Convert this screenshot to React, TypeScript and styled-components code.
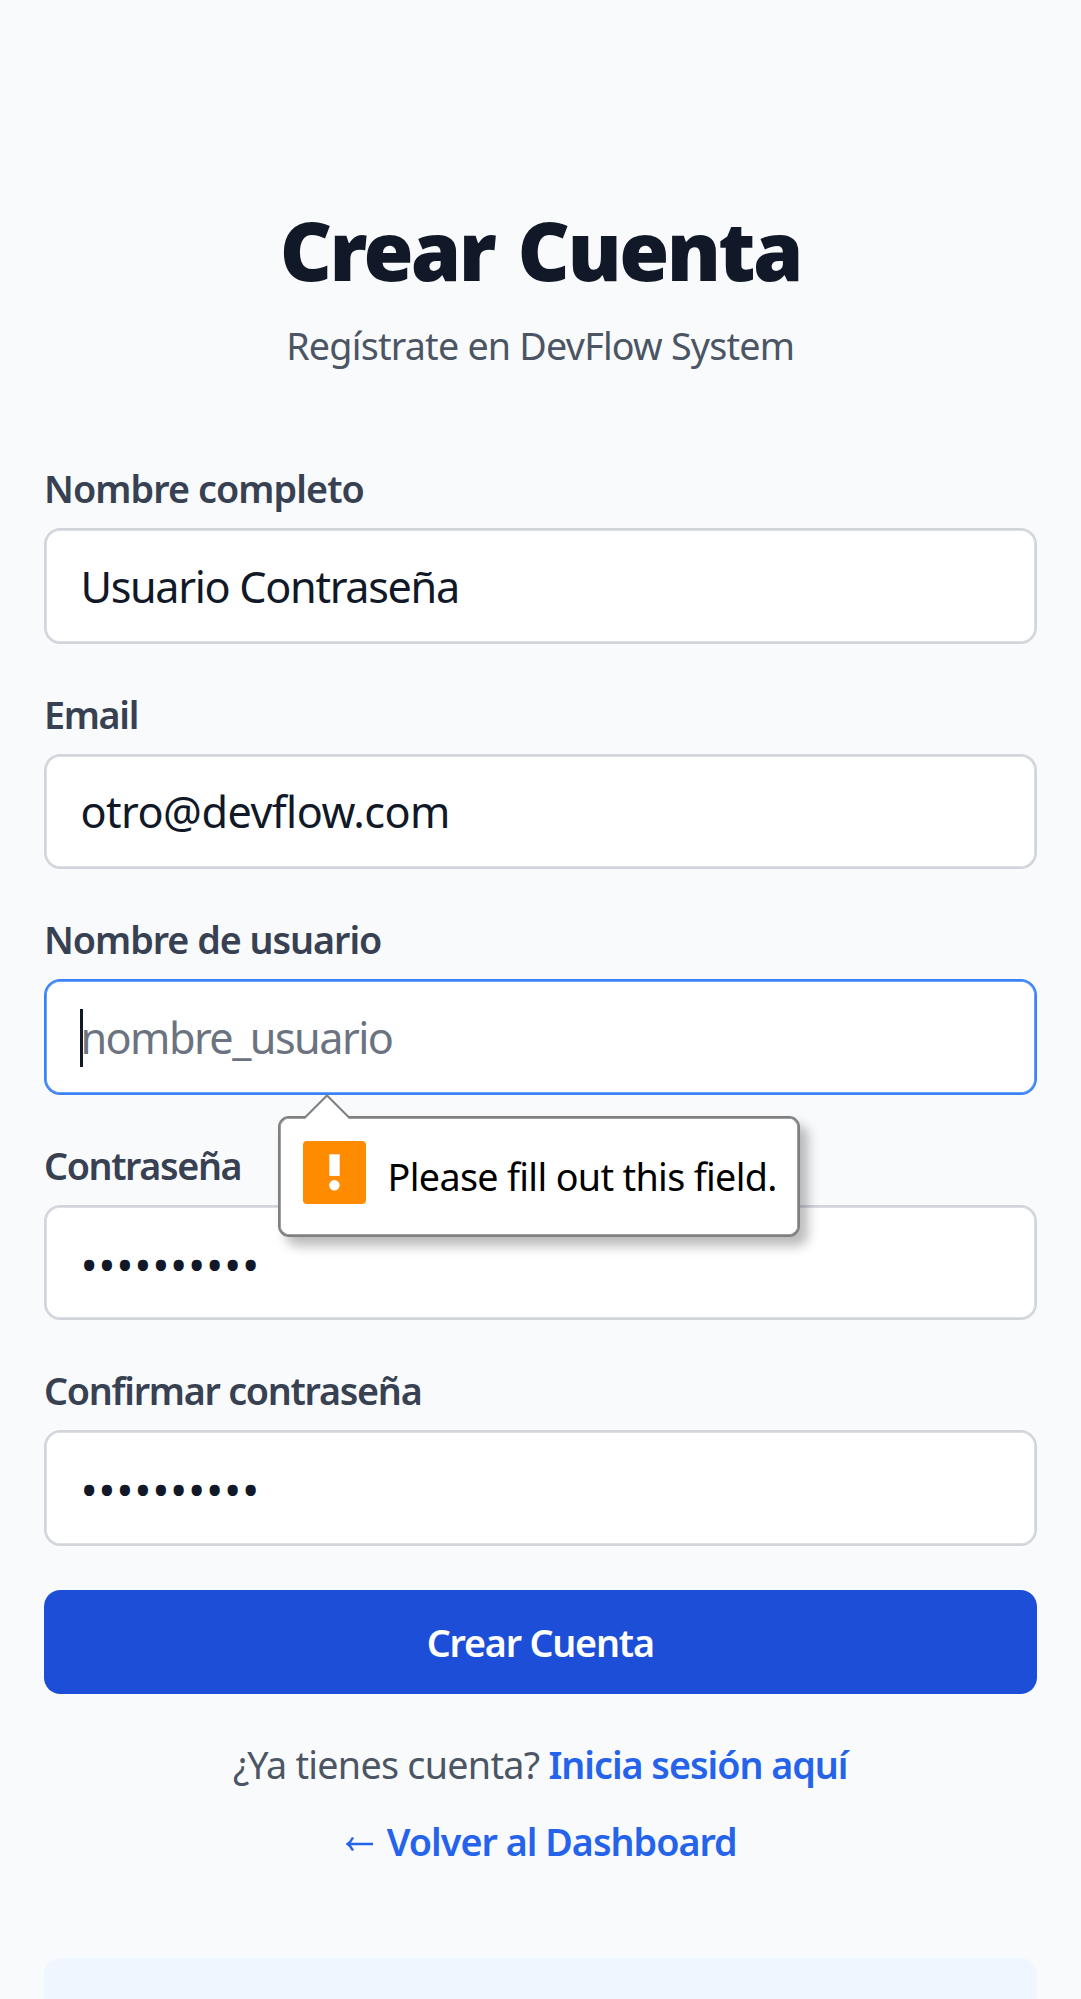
import React from "react";
import styled, { createGlobalStyle } from "styled-components";

const GlobalStyle = createGlobalStyle`
  *, *::before, *::after { box-sizing: border-box; }
  html, body { margin: 0; background: #f9fafc; }
  body {
    height: 1999px;
    overflow: hidden;
    font-family: "Noto Sans", "Open Sans", sans-serif;
  }
`;

const Page = styled.main`
  display: flex;
  flex-direction: column;
  height: 1999px;
  overflow: hidden;
  padding: 200px 44.5px 0 44px;
`;

const Header = styled.header`
  display: flex;
  flex-direction: column;
  gap: 19px;
  text-align: center;
`;

const Title = styled.h1`
  margin: 0;
  font-size: 81px;
  line-height: 99px;
  font-weight: 900;
  letter-spacing: -2.6px;
  word-spacing: 5px;
  color: #111827;
`;

const Subtitle = styled.p`
  margin: 0;
  font-size: 37.7px;
  line-height: 55px;
  letter-spacing: -0.79px;
  color: #4b5563;
`;

const Form = styled.form`
  display: flex;
  flex-direction: column;
  gap: 42.6px;
  margin-top: 88.1px;
`;

const Field = styled.div`
  display: flex;
  flex-direction: column;
  gap: 12.4px;
`;

const Label = styled.label<{ $track: number }>`
  font-size: 37.7px;
  line-height: 55px;
  font-weight: 600;
  letter-spacing: ${(p) => p.$track}px;
  color: #374151;
`;

const Control = styled.div`
  position: relative;
  display: flex;
`;

const Input = styled.input<{ $track: number; $active?: boolean }>`
  width: 100%;
  height: 115.5px;
  padding: 0 34.4px;
  border: 2px solid ${(p) => (p.$active ? "#3b82f6" : "#d1d5db")};
  border-radius: 16.5px;
  outline: none;
  background: #fff;
  box-shadow: inset 0 0 0 0.75px ${(p) => (p.$active ? "#3b82f6" : "#d1d5db")};
  color: #111827;
  font-family: inherit;
  font-size: 43.2px;
  letter-spacing: ${(p) => p.$track}px;

  &::placeholder {
    color: #6b7280;
    opacity: 1;
  }

  &[type="password"] {
    padding-top: 2px;
    font-size: 46px;
  }
`;

const Caret = styled.span`
  position: absolute;
  left: 36px;
  top: 30px;
  width: 2.75px;
  height: 58px;
  background: #111827;
`;

const Bubble = styled.div`
  position: absolute;
  z-index: 1;
  left: 234px;
  top: 137px;
  display: flex;
  align-items: flex-start;
  gap: 22px;
  width: 522px;
  height: 121px;
  padding: 23px 20px 0 22.6px;
  border: 2px solid #808080;
  border-radius: 11px;
  background: #fff;
  box-shadow:
    inset 0 0 0 0.75px #808080,
    8px 9px 12px rgba(0, 0, 0, 0.27);
`;

const BubbleArrow = styled.svg`
  position: absolute;
  left: 24px;
  top: -24px;
`;

const BubbleText = styled.span`
  padding-top: 8px;
  font-size: 37.7px;
  line-height: 55px;
  letter-spacing: -0.66px;
  white-space: nowrap;
  color: #000;
`;

const Submit = styled.button`
  height: 104.5px;
  margin-top: 1.4px;
  padding: 0;
  border: 0;
  border-radius: 16.5px;
  background: #1d4ed8;
  color: #fff;
  font-family: inherit;
  font-size: 37.7px;
  font-weight: 600;
  letter-spacing: -1.2px;
`;

const Links = styled.div`
  display: flex;
  flex-direction: column;
  align-items: center;
  gap: 21.4px;
  margin-top: 42.8px;
  font-size: 37.7px;
  line-height: 55px;
`;

const Prompt = styled.p`
  margin: 0;
  letter-spacing: -0.72px;
  color: #4b5563;
`;

const Link = styled.a<{ $track: number }>`
  font-weight: 600;
  letter-spacing: ${(p) => p.$track}px;
  color: #2563eb;
`;

const BackLink = styled(Link)`
  display: flex;
  align-items: center;
  gap: 14px;
  padding-left: 2px;
`;

const BackArrow = styled.svg`
  margin-top: 6px;
`;

const InfoPanel = styled.section`
  flex: none;
  height: 160px;
  margin-top: 89.3px;
  border-radius: 16.5px;
  background: #eff6ff;
`;

const WarningIcon = () => (
  <svg width="63" height="63" viewBox="0 0 63 63">
    <rect width="63" height="63" rx="4" fill="#ff8c00" />
    <rect x="26.3" y="13.3" width="10.4" height="21.6" fill="#fff" />
    <circle cx="31.4" cy="44.3" r="5.2" fill="#fff" />
  </svg>
);

export default function App() {
  return (
    <>
      <GlobalStyle />
      <Page>
        <Header>
          <Title>Crear Cuenta</Title>
          <Subtitle>Regístrate en DevFlow System</Subtitle>
        </Header>
        <Form onSubmit={(e) => e.preventDefault()}>
          <Field>
            <Label $track={-0.91}>Nombre completo</Label>
            <Control>
              <Input $track={-1.33} defaultValue="Usuario Contraseña" />
            </Control>
          </Field>
          <Field>
            <Label $track={-1.3}>Email</Label>
            <Control>
              <Input $track={-0.53} defaultValue="otro@devflow.com" />
            </Control>
          </Field>
          <Field>
            <Label $track={-1.03}>Nombre de usuario</Label>
            <Control>
              <Input $track={-1.55} $active placeholder="nombre_usuario" />
              <Caret />
              <Bubble>
                <BubbleArrow width="46" height="27" viewBox="0 0 46 27">
                  <path d="M1 24 L23 1.5 L45 24 V27 H1 Z" fill="#fff" />
                  <path d="M0.500 24 L23 1.500 L45.500 24" fill="none" stroke="#808080" strokeWidth="2" />
                </BubbleArrow>
                <WarningIcon />
                <BubbleText>Please fill out this field.</BubbleText>
              </Bubble>
            </Control>
          </Field>
          <Field>
            <Label $track={-1.38}>Contraseña</Label>
            <Control>
              <Input $track={0.65} type="password" defaultValue="contrasena" />
            </Control>
          </Field>
          <Field>
            <Label $track={-1.26}>Confirmar contraseña</Label>
            <Control>
              <Input $track={0.65} type="password" defaultValue="contrasena" />
            </Control>
          </Field>
          <Submit type="submit">Crear Cuenta</Submit>
        </Form>
        <Links>
          <Prompt>
            ¿Ya tienes cuenta? <Link $track={-1.02}>Inicia sesión aquí</Link>
          </Prompt>
          <BackLink $track={-0.98}>
            <BackArrow width="27" height="16" viewBox="0 0 27 16" fill="none" stroke="#2563eb" strokeWidth="2.4">
              <path d="M2 8H27M7 1.500C5.500 4.500 4 6.500 1.500 8C4 9.500 5.500 11.500 7 14.500" />
            </BackArrow>
            Volver al Dashboard
          </BackLink>
        </Links>
        <InfoPanel />
      </Page>
    </>
  );
}
